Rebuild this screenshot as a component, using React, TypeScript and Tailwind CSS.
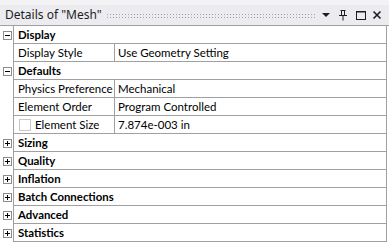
import React from "react";

const font = { fontFamily: 'Lato, "Noto Sans", sans-serif' };
const titleFont = { fontFamily: '"Noto Sans", sans-serif' };

function Box({ open }: { open: boolean }) {
  return (
    <div className="w-[9px] h-[9px] border border-[#8c8c8c] bg-white relative">
      <div className="absolute left-[1px] top-[3px] w-[5px] h-[1px] bg-black" />
      {!open && <div className="absolute left-[3px] top-[1px] w-[1px] h-[5px] bg-black" />}
    </div>
  );
}

function Section({ label, open }: { label: string; open: boolean }) {
  return (
    <div className="flex h-[18px]">
      <div className="w-[13px] flex items-center justify-start pl-[3px]">
        <Box open={open} />
      </div>
      <div className="flex-1 border-l border-b border-r border-[#a0a0a0] flex items-center pl-[4px] font-bold text-[11.4px] text-black whitespace-nowrap">
        {label}
      </div>
    </div>
  );
}

function Prop({ name, value, check }: { name: string; value: string; check?: boolean }) {
  return (
    <div className="flex h-[18px]">
      <div className="w-[13px]" />
      <div className="flex-1 flex border-l border-b border-r border-[#a0a0a0] text-[11.5px] text-black whitespace-nowrap">
        <div className="w-[101px] border-r border-[#a0a0a0] flex items-center pl-[4px] overflow-hidden">
          {check && <div className="w-[12px] h-[12px] border border-[#c8c8c8] bg-white mr-[4px] ml-[1px] shrink-0" />}
          {name}
        </div>
        <div className="flex-1 flex items-center pl-[3px]">{value}</div>
      </div>
    </div>
  );
}

export default function App() {
  return (
    <div className="w-[389px] h-[245px] bg-white overflow-hidden" style={font}>
      <div className="h-[5px] bg-[#f3f3f5]" />
      <div className="h-[21px] bg-[#ebebf0] border-b border-[#a0a0a0] flex items-center pl-[5px] pr-[6px]">
        <span className="text-[12px] text-[#1e1e1e] whitespace-nowrap" style={titleFont}>Details of "Mesh"</span>
        <div className="flex-1 mx-[4px] h-[5px] mt-[1px] bg-[radial-gradient(circle,#a0a0a8_0.7px,transparent_0.9px)] bg-[length:3px_3px]" />
        <svg width="10" height="6" viewBox="0 0 10 6" className="ml-[2px]">
          <polygon points="1,1 9,1 5,5" fill="#1e1e1e" />
        </svg>
        <svg width="12" height="12" viewBox="0 0 12 12" className="ml-[6px]">
          <path d="M3.5 1.5h5M4.5 1.5v5M7.5 1.5v5M2 6.5h8M6 6.5v5" stroke="#1e1e1e" strokeWidth="1" fill="none" />
        </svg>
        <svg width="12" height="12" viewBox="0 0 12 12" className="ml-[6px]">
          <rect x="1.5" y="2.5" width="9" height="8" stroke="#1e1e1e" strokeWidth="1" fill="none" />
          <path d="M1.5 3h9" stroke="#1e1e1e" strokeWidth="1" />
        </svg>
        <svg width="12" height="12" viewBox="0 0 12 12" className="ml-[4px]">
          <path d="M2.5 2.5l7 7M9.5 2.5l-7 7" stroke="#1e1e1e" strokeWidth="1.6" fill="none" />
        </svg>
      </div>
      <div className="pr-[2px]">
        <Section label="Display" open />
        <Prop name="Display Style" value="Use Geometry Setting" />
        <Section label="Defaults" open />
        <Prop name="Physics Preference" value="Mechanical" />
        <Prop name="Element Order" value="Program Controlled" />
        <Prop name="Element Size" value="7.874e-003 in" check />
        <Section label="Sizing" open={false} />
        <Section label="Quality" open={false} />
        <Section label="Inflation" open={false} />
        <Section label="Batch Connections" open={false} />
        <Section label="Advanced" open={false} />
        <Section label="Statistics" open={false} />
      </div>
    </div>
  );
}
